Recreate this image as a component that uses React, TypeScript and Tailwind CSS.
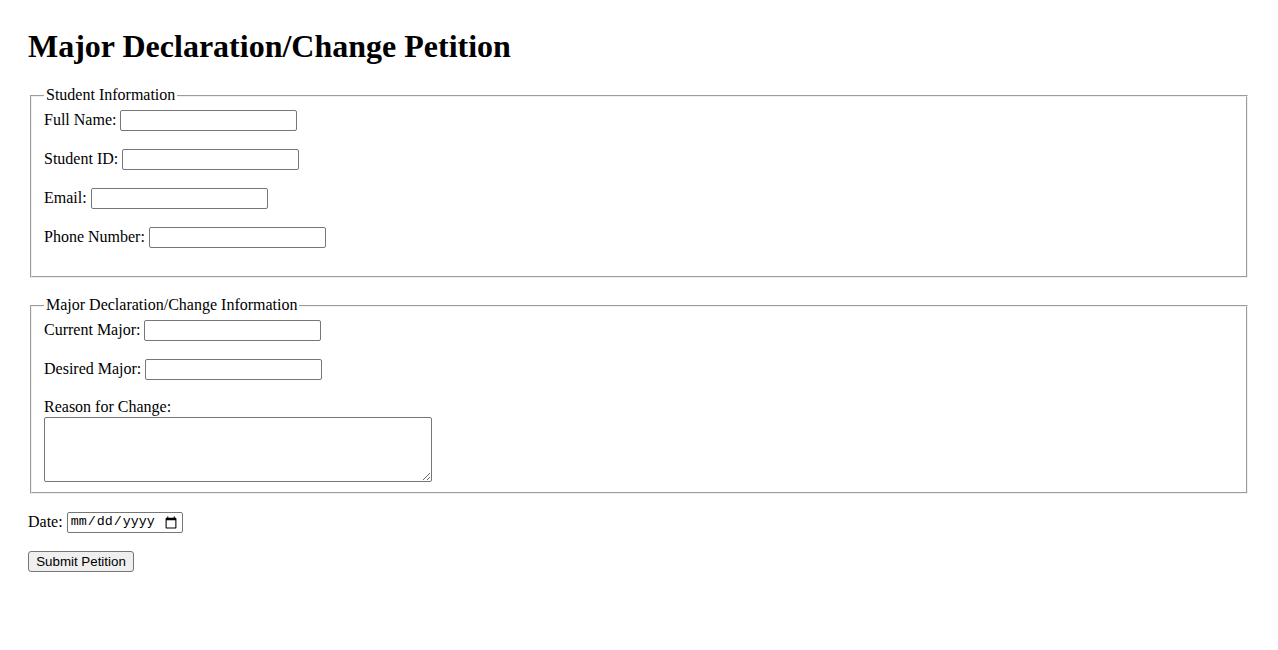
import React from "react";

const inputCls =
  "h-[21px] w-[177px] border border-[#767676] rounded-[2px] bg-white px-[2px] text-[13.33px] font-['Liberation_Sans',Arial,sans-serif]";

function Row({ label, id, type = "text" }: { label: string; id: string; type?: string }) {
  return (
    <div className="flex items-center gap-[4px] h-[21px] mb-[18px]">
      <label htmlFor={id} className="leading-[18.4px] pb-[2px]">
        {label}
      </label>
      <input id={id} type={type} className={inputCls} />
    </div>
  );
}

const fieldsetCls =
  "mx-[2px] border-2 [border-style:groove] border-[#f0f0f0] px-[12px] pt-[5.6px] pb-[10px]";

export default function App() {
  return (
    <div className="min-h-[650px] bg-white text-black px-[28px] pt-[28px] text-[16px] font-['Liberation_Serif','Times_New_Roman',serif]">
      <h1 className="text-[32px] font-bold leading-[37px] mb-[21.4px]">
        Major Declaration/Change Petition
      </h1>
      <form onSubmit={(e) => e.preventDefault()}>
        <fieldset className={fieldsetCls}>
          <legend className="px-[2px] leading-[18.4px]">Student Information</legend>
          <Row label="Full Name:" id="fullName" />
          <Row label="Student ID:" id="studentId" />
          <Row label="Email:" id="email" type="email" />
          <Row label="Phone Number:" id="phone" type="tel" />
        </fieldset>

        <fieldset className={"mt-[18px] " + fieldsetCls}>
          <legend className="px-[2px] leading-[18.4px]">Major Declaration/Change Information</legend>
          <Row label="Current Major:" id="currentMajor" />
          <Row label="Desired Major:" id="desiredMajor" />
          <label htmlFor="reason" className="block leading-[18.4px]">
            Reason for Change:
          </label>
          <textarea
            id="reason"
            className="block w-[388px] h-[65px] border border-[#767676] rounded-[2px] bg-white p-[2px] text-[13.33px] font-['Liberation_Mono',monospace]"
          />
        </fieldset>

        <div className="mt-[18px] flex items-center gap-[4px] h-[21px]">
          <label htmlFor="date" className="leading-[18.4px]">
            Date:
          </label>
          <input
            id="date"
            type="date"
            className="h-[21px] w-[116px] border border-[#767676] rounded-[2px] bg-white px-[2px] text-[13.33px] font-['Liberation_Mono','DejaVu_Sans_Mono',monospace]"
          />
        </div>

        <button
          type="submit"
          className="mt-[18px] h-[21px] w-[106px] border border-[#767676] rounded-[3px] bg-[#efefef] px-[6px] text-[13.33px] leading-[15px] font-['Liberation_Sans',Arial,sans-serif] text-black"
        >
          Submit Petition
        </button>
      </form>
    </div>
  );
}
